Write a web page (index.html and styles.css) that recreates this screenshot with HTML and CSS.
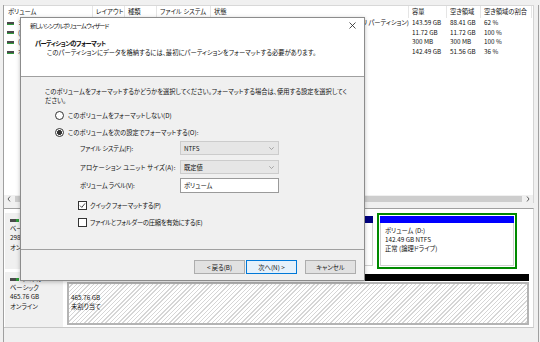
FILE: index.html
```html
<!DOCTYPE html>
<html lang="ja">
<head>
    <meta charset="UTF-8">
    <title>ディスクの管理</title>
    <link rel="stylesheet" href="styles.css">
</head>
<body>
    <div class="window">
        <div class="panes">
            <section class="list">
                <div class="grid head">
                    <div>ボリューム</div>
                    <div>レイアウト</div>
                    <div>種類</div>
                    <div>ファイル システム</div>
                    <div>状態</div>
                    <div>容量</div>
                    <div>空き領域</div>
                    <div>空き領域の割合</div>
                </div>
                <div class="grid row">
                    <div><span class="vol-icon"></span>システム (C:)</div>
                    <div>シンプル</div>
                    <div>ベーシック</div>
                    <div>NTFS</div>
                    <div class="state-long">正常 (ブート, ページ ファイル, クラッシュ ダンプ, プライマリ パーティション)</div>
                    <div>143.59 GB</div>
                    <div>88.41 GB</div>
                    <div>62 %</div>
                </div>
                <div class="grid row">
                    <div><span class="vol-icon"></span>(ディスク 0 パーティション 1)</div>
                    <div>シンプル</div>
                    <div>ベーシック</div>
                    <div></div>
                    <div>正常 (EFI システム パーティション)</div>
                    <div>11.72 GB</div>
                    <div>11.72 GB</div>
                    <div>100 %</div>
                </div>
                <div class="grid row">
                    <div><span class="vol-icon"></span>(ディスク 0 パーティション 4)</div>
                    <div>シンプル</div>
                    <div>ベーシック</div>
                    <div></div>
                    <div>正常 (回復パーティション)</div>
                    <div>300 MB</div>
                    <div>300 MB</div>
                    <div>100 %</div>
                </div>
                <div class="grid row">
                    <div><span class="vol-icon"></span>ボリューム (D:)</div>
                    <div>シンプル</div>
                    <div>ベーシック</div>
                    <div>NTFS</div>
                    <div>正常 (論理ドライブ)</div>
                    <div>142.49 GB</div>
                    <div>51.56 GB</div>
                    <div>36 %</div>
                </div>
                <div class="list-fill"></div>
                <div class="hscroll">
                    <span class="arrow"><svg width="4" height="6" viewBox="0 0 4 6"><polyline points="3,0.5 1,3 3,5.5" fill="none" stroke="#606060" stroke-width="1"/></svg></span>
                    <span class="thumb"></span>
                    <span class="arrow"><svg width="4" height="6" viewBox="0 0 4 6"><polyline points="1,0.5 3,3 1,5.5" fill="none" stroke="#606060" stroke-width="1"/></svg></span>
                </div>
            </section>

            <div class="splitter"></div>

            <section class="disks">
                <div class="disk">
                    <div class="disk-label">
                        <div><span class="disk-icon"></span>ディスク 0</div>
                        <div>ベーシック</div>
                        <div>298.09 GB</div>
                        <div>オンライン</div>
                    </div>
                    <div class="parts">
                        <div class="part p-efi">
                            <div class="bar primary"></div>
                            <div class="part-body">
                                <div></div>
                                <div>11.72 GB</div>
                                <div>正常 (EFI システム パーティション)</div>
                            </div>
                        </div>
                        <div class="part p-rec">
                            <div class="bar primary"></div>
                            <div class="part-body">
                                <div></div>
                                <div>300 MB</div>
                                <div>正常 (回復パーティション)</div>
                            </div>
                        </div>
                        <div class="part p-sys">
                            <div class="bar primary"></div>
                            <div class="part-body">
                                <div>システム (C:)</div>
                                <div>143.59 GB NTFS</div>
                                <div>正常 (ブート, ページ ファイル, クラッシュ ダンプ, プライマリ パーティション)</div>
                            </div>
                        </div>
                        <div class="part p-ext">
                            <div class="bar logical"></div>
                            <div class="part-body">
                                <div>ボリューム (D:)</div>
                                <div>142.49 GB NTFS</div>
                                <div>正常 (論理ドライブ)</div>
                            </div>
                        </div>
                    </div>
                </div>
                <div class="disk disk-second">
                    <div class="disk-label">
                        <div><span class="disk-icon"></span>ディスク 1</div>
                        <div>ベーシック</div>
                        <div>465.76 GB</div>
                        <div>オンライン</div>
                    </div>
                    <div class="parts">
                        <div class="part p-free">
                            <div class="bar unalloc"></div>
                            <div class="part-body hatch">
                                <div></div>
                                <div>465.76 GB</div>
                                <div>未割り当て</div>
                            </div>
                        </div>
                    </div>
                </div>
            </section>
        </div>

        <div class="dialog">
            <div class="dlg-title">
                <span>新しいシンプル ボリューム ウィザード</span>
                <svg class="close" width="7" height="7" viewBox="0 0 7 7"><path d="M0.5 0.5 L6.5 6.5 M6.5 0.5 L0.5 6.5" stroke="#222" stroke-width="0.8"/></svg>
            </div>
            <div class="dlg-head">
                <div class="head-title">パーティションのフォーマット</div>
                <div class="head-sub">このパーティションにデータを格納するには、最初にパーティションをフォーマットする必要があります。</div>
            </div>
            <div class="dlg-body">
                <p class="intro">このボリュームをフォーマットするかどうかを選択してください。フォーマットする場合は、使用する設定を選択してく<br>ださい。</p>
                <label class="radio-row first"><span class="radio"></span>このボリュームをフォーマットしない(D)</label>
                <label class="radio-row"><span class="radio checked"></span>このボリュームを次の設定でフォーマットする(O):</label>
                <div class="fields">
                    <div class="field">
                        <span class="field-label">ファイル システム(F):</span>
                        <span class="select">NTFS<svg width="5" height="3" viewBox="0 0 5 3"><polyline points="0.3,0.3 2.5,2.5 4.7,0.3" fill="none" stroke="#8a8a8a" stroke-width="0.7"/></svg></span>
                    </div>
                    <div class="field">
                        <span class="field-label">アロケーション ユニット サイズ(A):</span>
                        <span class="select">既定値<svg width="5" height="3" viewBox="0 0 5 3"><polyline points="0.3,0.3 2.5,2.5 4.7,0.3" fill="none" stroke="#8a8a8a" stroke-width="0.7"/></svg></span>
                    </div>
                    <div class="field">
                        <span class="field-label">ボリューム ラベル(V):</span>
                        <span class="textbox">ボリューム</span>
                    </div>
                    <label class="check-row first"><span class="checkbox"><svg width="7" height="7" viewBox="0 0 7 7"><polyline points="1,3.6 2.8,5.4 6,1.4" fill="none" stroke="#333" stroke-width="0.9"/></svg></span>クイック フォーマットする(P)</label>
                    <label class="check-row"><span class="checkbox"></span>ファイルとフォルダーの圧縮を有効にする(E)</label>
                </div>
            </div>
            <div class="dlg-foot">
                <button class="btn">&lt; 戻る(B)</button>
                <button class="btn default">次へ(N) &gt;</button>
                <button class="btn cancel">キャンセル</button>
            </div>
        </div>
    </div>
</body>
</html>
```

FILE: styles.css
```css
* {
    box-sizing: border-box;
}

body {
    margin: 0;
    font-family: "Noto Sans CJK JP", "Noto Sans", sans-serif;
    font-size: 6.3px;
    font-feature-settings: "palt";
    color: #111;
}

.window {
    position: relative;
    width: 540px;
    height: 342px;
    padding-top: 5px;
    background-color: #f0f0f0;
    overflow: hidden;
}

.panes {
    margin-left: 3px;
    width: 536px;
    height: 337px;
    border-left: 1px solid #a0a0a0;
    border-right: 1px solid #a0a0a0;
}

/* volume list */

.list {
    width: 530px;
    height: 198px;
    display: flex;
    flex-direction: column;
    background: white;
    border-top: 1px solid #d8d8d8;
    border-right: 1px solid #d4d4d4;
}

.grid {
    display: grid;
    grid-template-columns: 88px 32px 32px 54px 198px 38px 34px 51px;
    padding-left: 1px;
    white-space: nowrap;
}

.grid > div {
    overflow: hidden;
    padding-left: 3px;
}

.head {
    height: 12px;
    line-height: 12px;
}

.head > div {
    border-right: 1px solid #e5e5e5;
}

.row {
    height: 9.7px;
    line-height: 9.7px;
}

.row > div:first-child {
    padding-left: 2px;
}

.state-long {
    direction: rtl;
    text-align: left;
}

.vol-icon {
    display: inline-block;
    width: 7px;
    height: 3px;
    margin-right: 4px;
    vertical-align: middle;
    background: linear-gradient(#4a4a4a 0 2px, #2f9a3a 2px 3px);
}

.list-fill {
    flex: 1;
}

.hscroll {
    height: 8px;
    display: flex;
    background-color: #f0f0f0;
}

.hscroll .arrow {
    width: 10px;
    display: flex;
    align-items: center;
    justify-content: center;
}

.hscroll .thumb {
    flex: 1;
    margin: 1px 1px;
    background-color: #cdcdcd;
}

.splitter {
    height: 5px;
}

/* disk map */

.disks {
    width: 530px;
    height: 120px;
    padding-top: 4px;
    background: white;
    border-top: 1px solid #a0a0a0;
    border-right: 1px solid #d4d4d4;
    border-bottom: 1px solid #c8c8c8;
}

.disk {
    display: flex;
    height: 56px;
}

.disk-second {
    height: 55px;
    margin-top: 3px;
}

.disk-label {
    width: 58px;
    margin-left: 1px;
    padding: 2px 0 0 5px;
    background-color: #f0f0f0;
    line-height: 9.2px;
    white-space: nowrap;
}

.disk-icon {
    display: inline-block;
    width: 9px;
    height: 3px;
    margin-right: 3px;
    vertical-align: middle;
    background: linear-gradient(90deg, #4a4a4a 0 6px, #2f9a3a 6px 9px);
}

.parts {
    display: flex;
    gap: 1px;
    margin-left: 2px;
}

.part {
    display: flex;
    flex-direction: column;
    padding: 1px;
    border: 2px solid transparent;
}

.p-efi { width: 28px; }
.p-rec { width: 20px; }
.p-sys { width: 261px; }
.p-ext { width: 140px; border-color: #008a00; }

.p-free {
    width: 466px;
    padding: 0;
}

.bar {
    height: 7px;
    flex-shrink: 0;
}

.bar.primary { background-color: #000080; }
.bar.logical { background-color: #0000ff; }
.bar.unalloc { background-color: #000; }

.part-body {
    flex: 1;
    overflow: hidden;
    padding: 3px 0 0 4px;
    line-height: 9.2px;
    border: 1px solid #d0d0d0;
    border-top: none;
}

.part-body > div {
    min-height: 9.2px;
}

.part-body.hatch {
    overflow: visible;
    margin-top: 1px;
    padding-top: 0;
    padding-left: 2px;
    border: 2px solid #b4b4b4;
    background: repeating-linear-gradient(135deg, #ffffff 0 2px, #d6d6d6 2px 3px);
}

/* wizard dialog */

.dialog {
    position: absolute;
    left: 20px;
    top: 17px;
    width: 345px;
    height: 264px;
    display: flex;
    flex-direction: column;
    background-color: #f0f0f0;
    border: 1px solid #8c8c8c;
    box-shadow: 0 1px 4px rgba(0, 0, 0, 0.25);
}

.dlg-title {
    height: 16px;
    display: flex;
    align-items: center;
    justify-content: space-between;
    padding: 0 8px 2px 9px;
    font-size: 6.1px;
    letter-spacing: -0.95px;
    white-space: nowrap;
    background: white;
}

.dlg-head {
    height: 43px;
    padding: 5px 0 0 14px;
    line-height: 9.4px;
    white-space: nowrap;
    background: white;
    border-bottom: 1px solid #a0a0a0;
}

.head-title {
    font-weight: bold;
    letter-spacing: -0.6px;
}

.head-sub {
    padding-left: 12px;
}

.dlg-body {
    flex: 1;
    padding: 10px 0 0 24px;
    white-space: nowrap;
}

.intro {
    margin: 0;
    line-height: 9.2px;
}

.radio-row,
.check-row {
    display: flex;
    align-items: center;
    height: 12px;
}

.radio-row {
    margin: 5px 0 0 10px;
}

.radio-row.first {
    margin-top: 4px;
}

.radio {
    width: 9px;
    height: 9px;
    margin-right: 4px;
    border: 1px solid #333;
    border-radius: 50%;
    background: white;
}

.radio.checked {
    background: radial-gradient(circle, #333 0 2.2px, white 2.6px);
}

.fields {
    margin: 3px 0 0 35px;
}

.field {
    display: flex;
    align-items: center;
    margin-bottom: 5px;
}

.field:nth-child(2) {
    margin-bottom: 4px;
}

.field-label {
    width: 100px;
    letter-spacing: -0.2px;
}

.field:nth-child(2) .field-label {
    letter-spacing: 0.2px;
}

.select,
.textbox {
    width: 99px;
    height: 14px;
    display: flex;
    align-items: center;
    justify-content: space-between;
    padding: 0 4px 0 3px;
}

.select {
    background-color: #e6e6e6;
    border: 1px solid #cccccc;
}

.textbox {
    height: 15px;
    background: white;
    border: 1px solid #9a9a9a;
}

.check-row {
    margin: 5px 0 0 -2px;
    letter-spacing: -0.25px;
}

.check-row.first {
    margin-top: 6px;
}

.checkbox {
    width: 9px;
    height: 9px;
    margin-right: 3px;
    display: flex;
    align-items: center;
    justify-content: center;
    border: 1px solid #333;
    background: white;
}

.dlg-foot {
    height: 31px;
    display: flex;
    justify-content: flex-end;
    padding: 10px 8px 0 0;
    border-top: 1px solid #a0a0a0;
}

.btn {
    width: 51px;
    height: 14px;
    padding: 0;
    font: inherit;
    font-feature-settings: "palt";
    color: #111;
    background-color: #e1e1e1;
    border: 1px solid #adadad;
}

.btn.default {
    margin-left: 1px;
    background-color: #e5f1fb;
    border-color: #0078d7;
}

.btn.cancel {
    margin-left: 8px;
}
```
